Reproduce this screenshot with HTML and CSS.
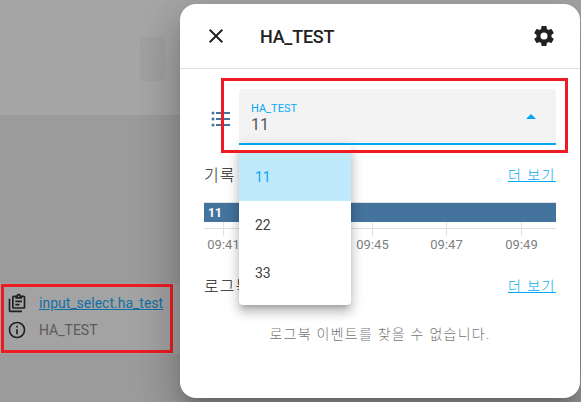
FILE: index.html
```html
<!DOCTYPE html>
<html lang="ko">
<head>
    <meta charset="UTF-8">
    <meta name="viewport" content="width=device-width, initial-scale=1.0">
    <title>HA_TEST</title>
    <link rel="stylesheet" href="styles.css">
</head>
<body>

    <div class="backdrop">
        <div class="top-band"><div class="ghost-tile"></div></div>
        <div class="info-panel">
            <div class="info-row">
                <svg class="info-icon" viewBox="0 0 24 24"><path d="M4 7V21H18V23H4C2.9 23 2 22.1 2 21V7H4M20 3C21.1 3 22 3.9 22 5V17C22 18.1 21.1 19 20 19H8C6.9 19 6 18.1 6 17V5C6 3.9 6.9 3 8 3H11.18C11.6 1.84 12.7 1 14 1C15.3 1 16.4 1.84 16.82 3H20M14 3C13.45 3 13 3.45 13 4C13 4.55 13.45 5 14 5C14.55 5 15 4.55 15 4C15 3.45 14.55 3 14 3M10 7V5H8V17H20V5H18V7H10M15 15H10V13H15V15M18 11H10V9H18V11Z"/></svg>
                <a class="info-link" href="#">input_select.ha_test</a>
            </div>
            <div class="info-row">
                <svg class="info-icon" viewBox="0 0 24 24"><path d="M11 9H13V7H11M12 20C7.59 20 4 16.41 4 12S7.59 4 12 4 20 7.59 20 12 16.41 20 12 20M12 2A10 10 0 0 0 2 12A10 10 0 0 0 12 22A10 10 0 0 0 22 12A10 10 0 0 0 12 2M11 17H13V11H11V17Z"/></svg>
                <span class="info-name">HA_TEST</span>
            </div>
        </div>
        <div class="mark mark-info"></div>
    </div>

    <div class="dialog">
        <header class="dialog-head">
            <svg class="head-icon" viewBox="0 0 24 24"><path d="M19 6.41L17.59 5 12 10.59 6.41 5 5 6.41 10.59 12 5 17.59 6.41 19 12 13.41 17.59 19 19 17.59 13.41 12z"/></svg>
            <h2 class="dialog-title">HA_TEST</h2>
            <svg class="head-icon gear" viewBox="0 0 24 24"><path d="M12 15.5A3.5 3.5 0 0 1 8.5 12 3.5 3.5 0 0 1 12 8.5 3.5 3.5 0 0 1 15.5 12 3.5 3.5 0 0 1 12 15.5M19.43 12.97C19.47 12.65 19.5 12.33 19.5 12S19.47 11.34 19.43 11L21.54 9.37C21.73 9.22 21.78 8.95 21.66 8.73L19.66 5.27C19.54 5.05 19.27 4.96 19.05 5.05L16.56 6.05C16.04 5.66 15.5 5.32 14.87 5.07L14.5 2.42C14.46 2.18 14.25 2 14 2H10C9.75 2 9.54 2.18 9.5 2.42L9.13 5.07C8.5 5.32 7.96 5.66 7.44 6.05L4.95 5.05C4.73 4.96 4.46 5.05 4.34 5.27L2.34 8.73C2.21 8.95 2.27 9.22 2.46 9.37L4.57 11C4.53 11.34 4.5 11.67 4.5 12S4.53 12.65 4.57 12.97L2.46 14.63C2.27 14.78 2.21 15.05 2.34 15.27L4.34 18.73C4.46 18.95 4.73 19.03 4.95 18.95L7.44 17.94C7.96 18.34 8.5 18.68 9.13 18.93L9.5 21.58C9.54 21.82 9.75 22 10 22H14C14.25 22 14.46 21.82 14.5 21.58L14.87 18.93C15.5 18.67 16.04 18.34 16.56 17.94L19.05 18.95C19.27 19.03 19.54 18.95 19.66 18.73L21.66 15.27C21.78 15.05 21.73 14.78 21.54 14.63L19.43 12.97Z"/></svg>
        </header>

        <div class="dialog-body">
            <div class="select-row">
                <svg class="list-icon" viewBox="0 0 24 24"><path d="M7 5H21V7H7V5M7 13V11H21V13H7M4 4.5A1.5 1.5 0 0 1 5.5 6A1.5 1.5 0 0 1 4 7.5A1.5 1.5 0 0 1 2.5 6A1.5 1.5 0 0 1 4 4.5M4 10.5A1.5 1.5 0 0 1 5.5 12A1.5 1.5 0 0 1 4 13.5A1.5 1.5 0 0 1 2.5 12A1.5 1.5 0 0 1 4 10.5M7 19V17H21V19H7M4 16.5A1.5 1.5 0 0 1 5.5 18A1.5 1.5 0 0 1 4 19.5A1.5 1.5 0 0 1 2.5 18A1.5 1.5 0 0 1 4 16.5Z"/></svg>
                <div class="select-box">
                    <div class="select-text">
                        <span class="select-label">HA_TEST</span>
                        <span class="select-value">11</span>
                    </div>
                    <span class="select-caret"></span>
                </div>
            </div>

            <div class="section-head history-head">
                <span class="section-title">기록</span>
                <a class="more-link" href="#">더 보기</a>
            </div>

            <svg class="chart" viewBox="0 0 352 60">
                <rect class="chart-line" x="0" y="0" width="352" height="1"/>
                <rect class="chart-line" x="0" y="26" width="352" height="1"/>
                <rect class="chart-line" x="19" y="0" width="1" height="34"/>
                <rect class="chart-line" x="94" y="0" width="1" height="34"/>
                <rect class="chart-line" x="168" y="0" width="1" height="34"/>
                <rect class="chart-line" x="242" y="0" width="1" height="34"/>
                <rect class="chart-line" x="317" y="0" width="1" height="34"/>
                <rect class="chart-bar" x="0" y="1" width="352" height="19"/>
                <text class="bar-label" x="4" y="15">11</text>
                <text class="tick-label" x="19.5" y="47">09:41</text>
                <text class="tick-label" x="168.5" y="47">09:45</text>
                <text class="tick-label" x="242.5" y="47">09:47</text>
                <text class="tick-label" x="317.5" y="47">09:49</text>
            </svg>

            <div class="section-head logbook-head">
                <span class="section-title">로그북</span>
                <a class="more-link" href="#">더 보기</a>
            </div>
            <p class="empty-note">로그북 이벤트를 찾을 수 없습니다.</p>
        </div>

        <ul class="menu">
            <li class="menu-item selected">11</li>
            <li class="menu-item">22</li>
            <li class="menu-item">33</li>
        </ul>
        <div class="mark mark-select"></div>
    </div>

</body>
</html>
```

FILE: styles.css
```css
* {
    box-sizing: border-box;
}

html, body {
    height: 100%;
}

body {
    margin: 0;
    overflow: hidden;
    font-family: Roboto, "Noto Sans CJK KR", sans-serif;
    background-color: #9b9b9b;
}

.backdrop {
    position: relative;
    height: 402px;
}

.top-band {
    height: 115px;
    padding: 37px 0 0 140px;
    background-color: #a6a6a6;
}

.ghost-tile {
    width: 25px;
    height: 44px;
    background-color: #a1a1a1;
}

.info-panel {
    width: 180px;
    height: 71px;
    margin-top: 168px;
    padding: 6px 0 0 7px;
    background-color: #a3a3a3;
}

.info-row {
    display: flex;
    align-items: center;
    height: 27px;
}

.info-icon {
    width: 20px;
    height: 20px;
    fill: #1f1f1f;
}

.info-link {
    margin-left: 12px;
    font-size: 14px;
    color: #1270a3;
}

.info-name {
    margin-left: 12px;
    font-size: 14px;
    color: #5f5a58;
}

.mark {
    position: absolute;
    border: 3px solid #ed1c24;
    pointer-events: none;
}

.mark-info {
    left: 1px;
    top: 284px;
    width: 172px;
    height: 69px;
}

.mark-select {
    left: 41px;
    top: 74px;
    width: 347px;
    height: 75px;
}

.dialog {
    position: absolute;
    left: 180px;
    top: 4px;
    width: 400px;
    height: 394px;
    background-color: #fff;
    border-radius: 16px;
    box-shadow: 0 11px 15px -7px rgba(0, 0, 0, 0.2), 0 24px 38px 3px rgba(0, 0, 0, 0.14), 0 9px 46px 8px rgba(0, 0, 0, 0.12);
}

.dialog-head {
    display: flex;
    align-items: center;
    height: 65px;
    padding: 0 24px;
    border-bottom: 1px solid #e0e0e0;
}

.head-icon {
    width: 24px;
    height: 24px;
    fill: #212121;
}

.gear {
    margin-left: auto;
}

.dialog-title {
    margin: 0 0 0 32px;
    font-size: 18px;
    font-weight: 500;
    letter-spacing: -0.25px;
    color: #212121;
}

.dialog-body {
    padding: 20px 24px 0;
}

.select-row {
    display: flex;
    align-items: flex-start;
}

.list-icon {
    width: 24px;
    height: 24px;
    margin: 18px 6px 0 5px;
    fill: #44739e;
}

.select-box {
    display: flex;
    align-items: center;
    justify-content: space-between;
    flex: 1;
    height: 56px;
    padding: 4px 16px 0 12px;
    background-color: #f3f3f3;
    border-bottom: 2px solid #03a9f4;
    border-radius: 4px 4px 0 0;
}

.select-text {
    display: flex;
    flex-direction: column;
}

.select-label {
    font-size: 11px;
    line-height: 13px;
    color: #03a9f4;
}

.select-value {
    font-size: 16px;
    line-height: 20px;
    color: #555;
}

.select-caret {
    width: 0;
    height: 0;
    margin: -4px 4px 0 0;
    border-left: 5px solid transparent;
    border-right: 5px solid transparent;
    border-bottom: 5px solid #03a9f4;
}

.section-head {
    display: flex;
    justify-content: space-between;
    align-items: center;
    height: 20px;
}

.history-head {
    margin-top: 19px;
}

.logbook-head {
    margin-top: 13px;
}

.section-title {
    font-size: 16px;
    font-weight: 300;
    letter-spacing: 1px;
    color: #212121;
}

.more-link {
    font-size: 14px;
    font-weight: 300;
    letter-spacing: 1.5px;
    color: #03a9f4;
}

.chart {
    display: block;
    width: 352px;
    height: 60px;
    margin-top: 18px;
}

.chart-line {
    fill: #e0e0e0;
}

.chart-bar {
    fill: #44739e;
}

.bar-label {
    font-size: 12px;
    font-weight: 700;
    fill: #fff;
}

.tick-label {
    font-size: 13px;
    text-anchor: middle;
    fill: #808080;
}

.empty-note {
    margin: 28px 0 0;
    text-align: center;
    font-size: 14px;
    font-weight: 300;
    letter-spacing: 1.25px;
    color: #757575;
}

.menu {
    position: absolute;
    left: 59px;
    top: 141px;
    width: 112px;
    margin: 0;
    padding: 8px 0;
    list-style: none;
    background-color: #fff;
    border-radius: 4px;
    box-shadow: 0 5px 5px -3px rgba(0, 0, 0, 0.2), 0 8px 10px 1px rgba(0, 0, 0, 0.14), 0 3px 14px 2px rgba(0, 0, 0, 0.12);
}

.menu-item {
    height: 48px;
    padding-left: 16px;
    font-size: 14px;
    line-height: 48px;
    color: #424242;
}

.menu-item.selected {
    color: #03a9f4;
    background-color: #c0e9fc;
}
```
